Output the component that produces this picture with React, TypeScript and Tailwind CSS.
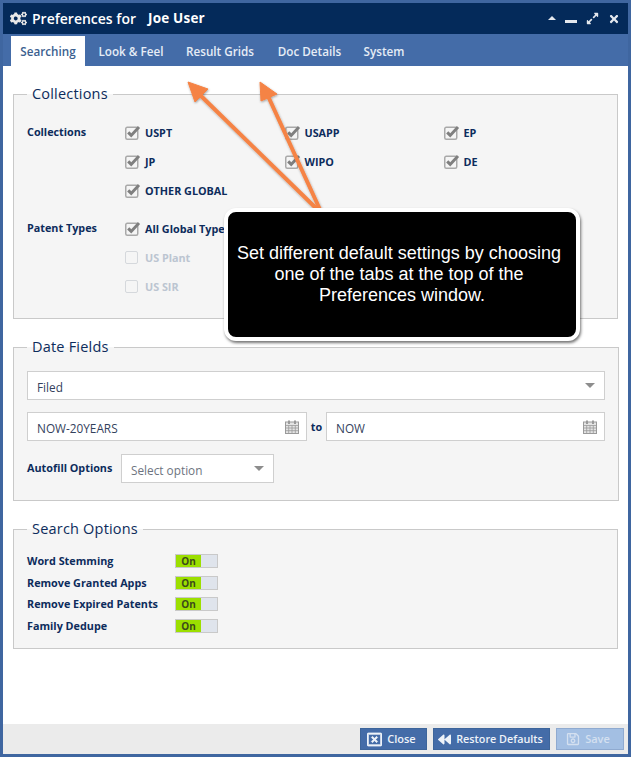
import React from 'react';
import { FaBackward, FaCogs, FaExpandAlt, FaRegSave, FaRegWindowClose, FaTimes } from 'react-icons/fa';

const font = { fontFamily: '"Open Sans", sans-serif' };

function Check({ label, checked = true }: { label: string; checked?: boolean }) {
  return (
    <div className="flex h-[29px] items-center gap-[3px]">
      {checked ? (
        <svg width="17" height="15" viewBox="0 0 17 15" className="shrink-0">
          <rect x="0.75" y="2.25" width="12" height="12" rx="1.5" fill="#f5f5f5" stroke="#a9a9a9" strokeWidth="1.5" />
          <path d="M3.2 7.4 L6.2 10.4 L14 2" fill="none" stroke="#7f7f7f" strokeWidth="3" />
        </svg>
      ) : (
        <span className="mr-[4px] block h-[13px] w-[13px] shrink-0 rounded-[2px] border border-[#d5d8dc] bg-[#f5f5f5]" />
      )}
      <span className={`whitespace-nowrap pt-[1px] text-[10.8px] font-bold ${checked ? 'text-[#0d2c5c]' : 'text-[#bcc5d1]'}`}>{label}</span>
    </div>
  );
}

function Section({ title, className, children }: { title: string; className: string; children: React.ReactNode }) {
  return (
    <fieldset className={`mx-[10px] border border-[#c9c9c9] bg-[#f5f5f5] ${className}`}>
      <legend className="px-[5px] text-[14.5px] leading-[20px] tracking-[0.2px] text-[#0d2c5c]">{title}</legend>
      {children}
    </fieldset>
  );
}

function Calendar() {
  return (
    <svg width="14" height="14" viewBox="0 0 14 14" className="shrink-0">
      <rect x="0.5" y="2" width="13" height="11.5" fill="#e4e4e4" stroke="#9a9a9a" />
      <path d="M0.5 5.5H13.5M0.5 8H13.5M0.5 10.7H13.5M3.7 5.5V13.5M7 5.5V13.5M10.3 5.5V13.5" stroke="#9a9a9a" strokeWidth="0.8" />
      <rect x="3" y="0.5" width="2" height="3.5" fill="#9a9a9a" />
      <rect x="9" y="0.5" width="2" height="3.5" fill="#9a9a9a" />
    </svg>
  );
}

function Caret() {
  return <span className="block h-0 w-0 border-x-[5px] border-t-[5px] border-x-transparent border-t-[#8d8d8d]" />;
}

function DateInput({ value, className }: { value: string; className: string }) {
  return (
    <div className={`flex h-[29px] items-center justify-between border border-[#cfcfcf] bg-white pl-[9px] pr-[7px] ${className}`}>
      <span className="pt-[4px] text-[11.8px] text-[#33415c]">{value}</span>
      <Calendar />
    </div>
  );
}

function Toggle({ label }: { label: string }) {
  return (
    <div className="flex h-[21.6px] items-center">
      <span className="w-[148px] whitespace-nowrap text-[10.8px] font-bold text-[#0d2c5c]">{label}</span>
      <span className="flex h-[14px] w-[43px] border border-[#c9c9c9] bg-[#dfe4ec]">
        <span className="flex w-[25px] items-center justify-center bg-[#9cdf00] text-[10px] font-bold leading-none text-[#3b4a1a]">On</span>
      </span>
    </div>
  );
}

function FooterButton({ icon, label, className }: { icon: React.ReactNode; label: string; className: string }) {
  return (
    <button className={`flex h-[22px] items-center justify-center border font-semibold ${className}`}>
      {icon}
      {label}
    </button>
  );
}

export default function App() {
  return (
    <div style={font} className="relative flex h-[757px] w-[631px] flex-col overflow-hidden border-[3px] border-[#3f66a0] bg-white">
      <div className="flex h-[31px] shrink-0 items-center justify-between bg-[#042a5a] pl-[7px] pr-[8px] text-white">
        <div className="flex items-center gap-[5px]">
          <FaCogs className="h-[17px] w-[17px] text-[#e8e8e8]" />
          <span className="text-[14px] font-semibold leading-none">Preferences for</span>
          <span className="ml-[7px] text-[13.5px] font-bold leading-none tracking-[0.2px]">Joe User</span>
        </div>
        <div className="flex items-center gap-[9px] text-[#e4e8ee]">
          <span className="block h-0 w-0 -translate-y-[1px] border-x-[4.5px] border-b-[4.5px] border-x-transparent border-b-[#e4e8ee]" />
          <span className="mt-[6px] block h-[2.5px] w-[12px] bg-[#e4e8ee]" />
          <FaExpandAlt className="h-[13px] w-[13px]" />
          <FaTimes className="h-[12px] w-[12px]" />
        </div>
      </div>

      <div className="flex h-[32px] shrink-0 items-end bg-[#446ca8] pl-[8px] text-[11.7px] font-semibold text-[#e6edf6]">
        <span className="flex h-[30px] w-[74px] items-center justify-center bg-white pt-[2px] text-[#3b5f8f]">Searching</span>
        <span className="flex h-[30px] w-[92px] items-center justify-center pt-[2px]">Look &amp; Feel</span>
        <span className="-ml-[4px] flex h-[30px] w-[94px] items-center justify-center pt-[2px]">Result Grids</span>
        <span className="-ml-[1px] flex h-[30px] w-[87px] items-center justify-center pt-[2px]">Doc Details</span>
        <span className="ml-[1px] flex h-[30px] w-[60px] items-center justify-center pt-[2px]">System</span>
      </div>

      <div className="flex min-h-0 flex-1 flex-col bg-white pt-[18px]">
        <Section title="Collections" className="h-[235px] pl-[13px] pt-[14px]">
          <div className="flex">
            <span className="w-[98px] pt-[6px] text-[10.8px] font-bold text-[#0d2c5c]">Collections</span>
            <div className="grid grid-cols-[159.5px_159px_auto]">
              <Check label="USPT" />
              <Check label="USAPP" />
              <Check label="EP" />
              <Check label="JP" />
              <Check label="WIPO" />
              <Check label="DE" />
              <Check label="OTHER GLOBAL" />
            </div>
          </div>
          <div className="mt-[9px] flex">
            <span className="w-[98px] pt-[6px] text-[10.8px] font-bold text-[#0d2c5c]">Patent Types</span>
            <div>
              <Check label="All Global Types" />
              <Check label="US Plant" checked={false} />
              <Check label="US SIR" checked={false} />
            </div>
          </div>
        </Section>

        <Section title="Date Fields" className="mt-[18px] h-[164px] px-[13px] pt-[14px]">
          <div className="flex h-[29px] items-center justify-between border border-[#cfcfcf] bg-white pl-[9px] pr-[9px]">
            <span className="pt-[4px] text-[11.8px] text-[#33415c]">Filed</span>
            <Caret />
          </div>
          <div className="mt-[12px] flex items-center">
            <DateInput value="NOW-20YEARS" className="w-[280px]" />
            <span className="w-[19px] pt-[1px] text-center text-[10.8px] font-bold text-[#0d2c5c]">to</span>
            <DateInput value="NOW" className="w-[279px]" />
          </div>
          <div className="mt-[13px] flex items-center">
            <span className="w-[94px] pb-[1px] text-[10.8px] font-bold text-[#0d2c5c]">Autofill Options</span>
            <div className="flex h-[29px] w-[153px] items-center justify-between border border-[#cfcfcf] bg-white pl-[9px] pr-[9px]">
              <span className="pt-[4px] text-[11.8px] text-[#6d7480]">Select option</span>
              <Caret />
            </div>
          </div>
        </Section>

        <Section title="Search Options" className="mt-[18px] h-[130px] pl-[13px] pt-[11.4px]">
          <Toggle label="Word Stemming" />
          <Toggle label="Remove Granted Apps" />
          <Toggle label="Remove Expired Patents" />
          <Toggle label="Family Dedupe" />
        </Section>

        <div className="mt-auto flex h-[30px] shrink-0 items-center justify-end gap-[6px] bg-[#ebebeb] pr-[4px]">
          <FooterButton
            icon={<FaRegWindowClose className="h-[15px] w-[15px]" stroke="currentColor" strokeWidth={24} />}
            label="Close"
            className="w-[67px] gap-[5px] border-[#3d659b] bg-[#446ca8] pr-[4px] text-[11px] text-[#eef3f9]"
          />
          <FooterButton
            icon={<FaBackward className="h-[13px] w-[13px]" />}
            label="Restore Defaults"
            className="w-[117px] gap-[5px] border-[#3d659b] bg-[#446ca8] pr-[2px] text-[10.8px] text-[#eef3f9]"
          />
          <FooterButton
            icon={<FaRegSave className="h-[14px] w-[14px]" />}
            label="Save"
            className="w-[68px] gap-[5px] border-[#8faad0] bg-[#a3bfe3] pr-[4px] text-[11px] text-[#d4e0f0]"
          />
        </div>
      </div>

      {/* annotation overlay */}
      <svg width="631" height="757" className="pointer-events-none absolute -left-[3px] -top-[3px]">
        <defs>
          <filter id="arrowShadow" x="-10%" y="-10%" width="120%" height="120%">
            <feDropShadow dx="0.5" dy="1" stdDeviation="0.8" floodColor="#000" floodOpacity="0.35" />
          </filter>
        </defs>
        <g filter="url(#arrowShadow)" fill="#f58345" stroke="#f58345">
          <path d="M322 214 L199 94" fill="none" strokeWidth="4" />
          <path d="M188 82 L208 89 L195 102 Z" strokeWidth="1" />
          <path d="M322 214 L268 96" fill="none" strokeWidth="4" />
          <path d="M260 82 L277 94 L261 101 Z" strokeWidth="1" />
        </g>
      </svg>
      <div className="absolute left-[221px] top-[205px] flex h-[133px] w-[356px] items-center justify-center rounded-[12px] border-[4px] border-white bg-black pr-[6px] text-center font-['Liberation_Sans',sans-serif] text-[18px] leading-[21px] text-white shadow-[1px_2px_3px_rgba(0,0,0,0.55)]">
        <p>
          Set different default settings by choosing
          <br />
          one of the tabs at the top of the
          <br />
          <span className="pl-[6px]">Preferences window.</span>
        </p>
      </div>
    </div>
  );
}
